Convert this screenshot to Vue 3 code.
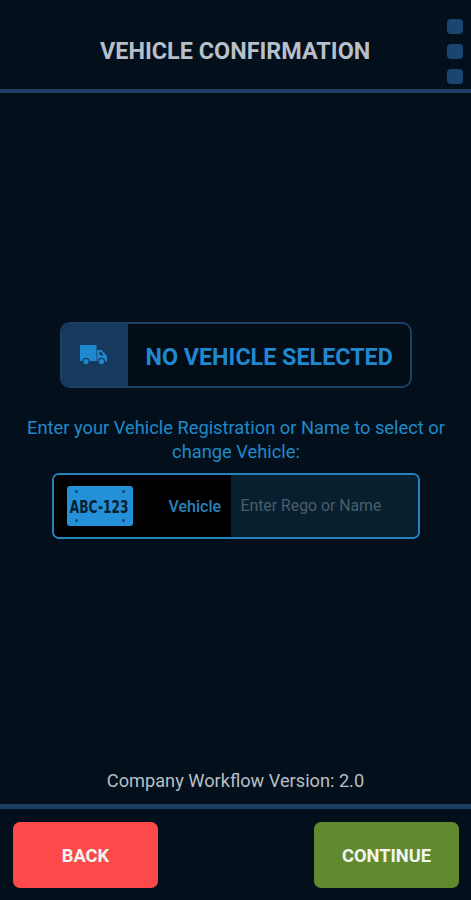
<template>
  <div class="screen">
    <header class="top">
      <h1 class="title">VEHICLE CONFIRMATION</h1>
      <div class="dots">
        <span class="dot"></span>
        <span class="dot"></span>
        <span class="dot"></span>
      </div>
    </header>

    <main class="content">
      <div class="status">
        <div class="status-icon">
          <svg width="27" height="20" viewBox="0 0 27 20">
            <path fill="#2088cf" d="M1 0h14.500a1 1 0 0 1 1 1v15h-16.500V1a1 1 0 0 1 1-1z" />
            <path fill="#2088cf" d="M17.200 5h4.300l5.500 6v5.500h-9.800z" />
            <path fill="#153a5e" d="M19.500 6.800h1.400l2.900 3.400h-4.300z" />
            <circle cx="6" cy="16.500" r="3.100" fill="#2088cf" stroke="#153a5e" stroke-width="1.100" />
            <circle cx="21.500" cy="16.500" r="3.100" fill="#2088cf" stroke="#153a5e" stroke-width="1.100" />
          </svg>
        </div>
        <div class="status-text">NO VEHICLE SELECTED</div>
      </div>

      <p class="hint">Enter your Vehicle Registration or Name to select or change Vehicle:</p>

      <div class="field">
        <div class="field-left">
          <div class="plate">
            <i class="screw tl"></i>
            <i class="screw tr"></i>
            <i class="screw bl"></i>
            <i class="screw br"></i>
            <span class="plate-text">ABC-123</span>
          </div>
          <span class="field-label">Vehicle</span>
        </div>
        <div class="field-input">Enter Rego or Name</div>
      </div>
    </main>

    <p class="version">Company Workflow Version: 2.0</p>

    <footer class="bottom">
      <button class="btn back">BACK</button>
      <button class="btn next">CONTINUE</button>
    </footer>
  </div>
</template>

<script setup>
</script>

<style>
html,
body {
  margin: 0;
  background: #03101b;
}
</style>

<style scoped>
.screen {
  width: 471px;
  height: 900px;
  display: flex;
  flex-direction: column;
  background: #03101b;
  font-family: Roboto, "Liberation Sans", sans-serif;
  overflow: hidden;
}

.top {
  height: 89px;
  flex: none;
  display: flex;
  align-items: flex-start;
  justify-content: space-between;
  border-bottom: 4px solid #1c3f66;
}

.title {
  margin: 36px 0 0 100px;
  font-size: 23.400px;
  line-height: 30px;
  font-weight: 700;
  color: #b7bfc8;
  white-space: nowrap;
}

.dots {
  display: flex;
  flex-direction: column;
  gap: 10px;
  margin: 19px 8px 0 0;
}

.dot {
  width: 16px;
  height: 15px;
  border-radius: 4px;
  background: #1c4470;
}

.content {
  flex: 1;
  display: flex;
  flex-direction: column;
  align-items: center;
  padding-top: 229px;
}

.status {
  width: 352px;
  height: 66px;
  box-sizing: border-box;
  display: flex;
  border: 2px solid #1c3f66;
  border-radius: 10px;
  overflow: hidden;
  background: #020d17;
}

.status-icon {
  width: 66px;
  box-sizing: border-box;
  padding-right: 3px;
  display: flex;
  align-items: center;
  justify-content: center;
  background: #153a5e;
}

.status-text {
  flex: 1;
  padding-left: 18px;
  font-size: 23.300px;
  line-height: 66px;
  font-weight: 700;
  color: #2088cf;
  white-space: nowrap;
}

.hint {
  width: 440px;
  margin: 28px 0 9px 1px;
  font-size: 18.300px;
  line-height: 24px;
  text-align: center;
  color: #2089c9;
}

.field {
  width: 368px;
  height: 66px;
  box-sizing: border-box;
  display: flex;
  border: 2px solid #2582bf;
  border-radius: 7px;
  overflow: hidden;
}

.field-left {
  width: 177px;
  flex: none;
  display: flex;
  align-items: center;
  background: #000;
}

.plate {
  position: relative;
  width: 66px;
  height: 40px;
  margin-left: 13px;
  flex: none;
  display: flex;
  align-items: center;
  justify-content: center;
  border-radius: 3px;
  background: #2390d8;
}

.plate-text {
  flex: none;
  transform: scaleX(0.68);
  color: #06202f;
  font-family: "DejaVu Sans", sans-serif;
  font-size: 18px;
  font-weight: 700;
  white-space: nowrap;
}

.screw {
  position: absolute;
  width: 3px;
  height: 3px;
  border-radius: 50%;
  background: #0e4a75;
}

.tl { left: 8px; top: 4px; }
.tr { right: 8px; top: 4px; }
.bl { left: 8px; bottom: 4px; }
.br { right: 8px; bottom: 4px; }

.field-label {
  margin-left: 36px;
  font-size: 16px;
  font-weight: 500;
  color: #2a82bd;
}

.field-input {
  flex: 1;
  padding-left: 10px;
  font-size: 15.800px;
  line-height: 62px;
  color: #4b5d6b;
  background: #07202f;
  white-space: nowrap;
}

.version {
  margin: 0 0 11px;
  font-size: 18.200px;
  line-height: 24px;
  text-align: center;
  color: #b7bfc8;
}

.bottom {
  flex: none;
  height: 96px;
  box-sizing: border-box;
  display: flex;
  justify-content: space-between;
  padding: 13px 12px 0 13px;
  border-top: 5px solid #1c3f66;
}

.btn {
  width: 145px;
  height: 66px;
  border: 0;
  border-radius: 7px;
  font-family: inherit;
  font-size: 18.300px;
  font-weight: 700;
  color: #f2f6f2;
}

.back {
  background: #fc4a4a;
}

.next {
  background: #618a2e;
}
</style>
